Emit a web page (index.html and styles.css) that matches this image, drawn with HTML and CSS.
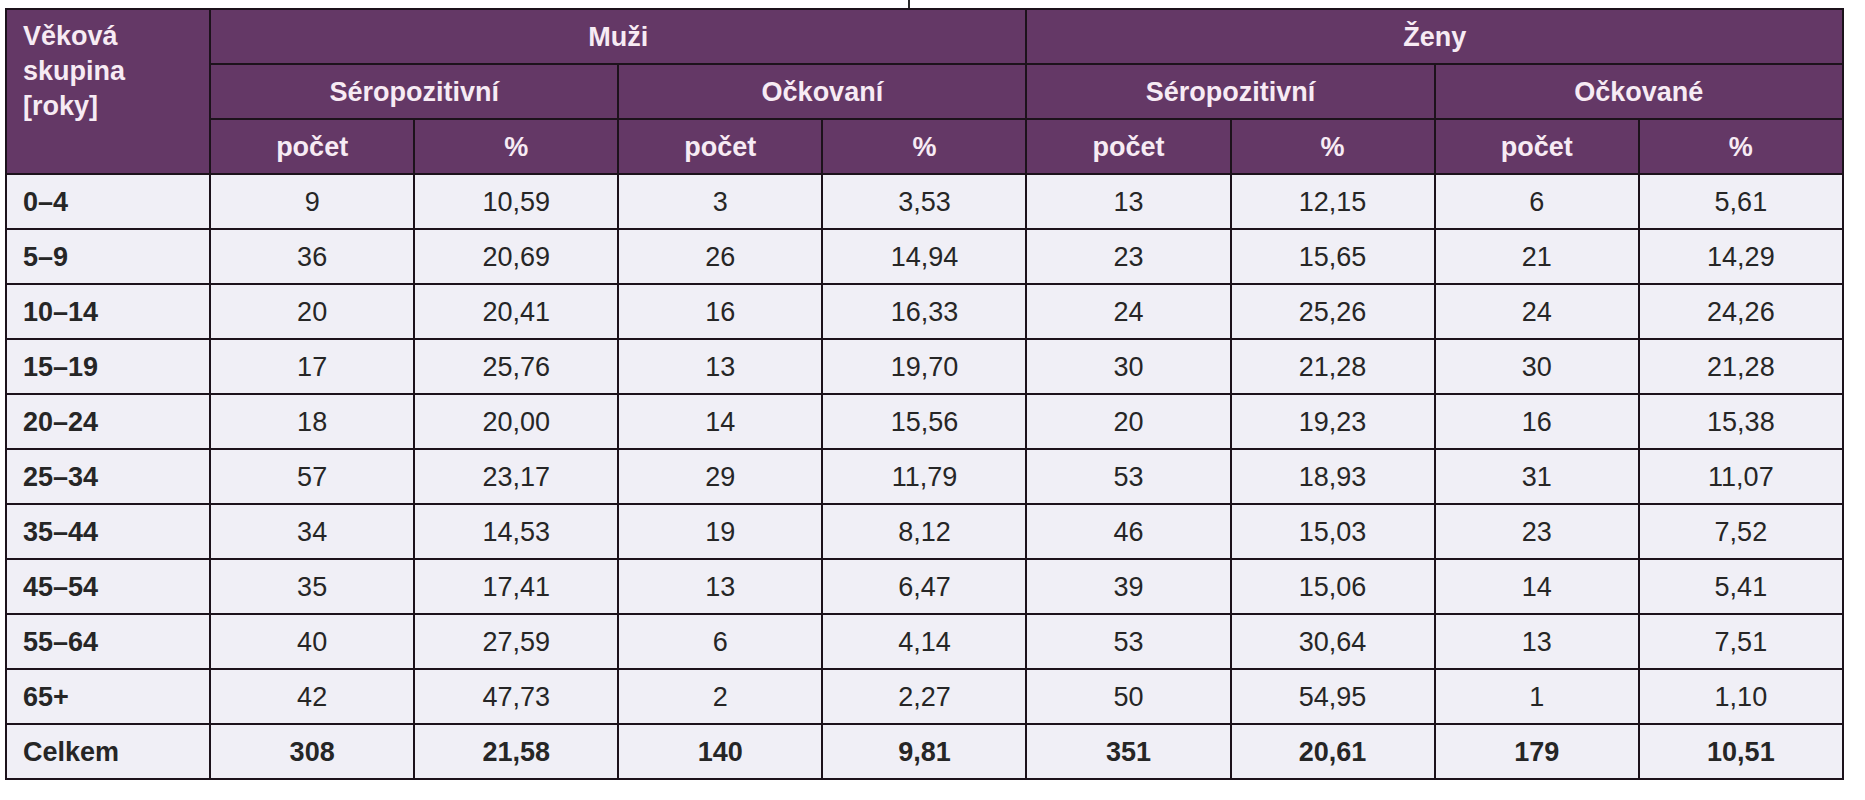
FILE: index.html
```html
<!DOCTYPE html>
<html lang="cs">
<head>
<meta charset="utf-8">
<title>Tabulka</title>
<link rel="stylesheet" href="styles.css">
</head>
<body>
<div class="page">
  <div class="caption"><span class="tick"></span></div>
  <table class="data">
    <colgroup>
      <col><col><col><col><col><col><col><col><col>
    </colgroup>
    <thead>
      <tr>
        <th class="age" rowspan="3">Věková<br>skupina<br>[roky]</th>
        <th colspan="4">Muži</th>
        <th colspan="4">Ženy</th>
      </tr>
      <tr>
        <th colspan="2">Séropozitivní</th>
        <th colspan="2">Očkovaní</th>
        <th colspan="2">Séropozitivní</th>
        <th colspan="2">Očkované</th>
      </tr>
      <tr>
        <th>počet</th><th>%</th><th>počet</th><th>%</th>
        <th>počet</th><th>%</th><th>počet</th><th>%</th>
      </tr>
    </thead>
    <tbody>
      <tr><th>0–4</th><td>9</td><td>10,59</td><td>3</td><td>3,53</td><td>13</td><td>12,15</td><td>6</td><td>5,61</td></tr>
      <tr><th>5–9</th><td>36</td><td>20,69</td><td>26</td><td>14,94</td><td>23</td><td>15,65</td><td>21</td><td>14,29</td></tr>
      <tr><th>10–14</th><td>20</td><td>20,41</td><td>16</td><td>16,33</td><td>24</td><td>25,26</td><td>24</td><td>24,26</td></tr>
      <tr><th>15–19</th><td>17</td><td>25,76</td><td>13</td><td>19,70</td><td>30</td><td>21,28</td><td>30</td><td>21,28</td></tr>
      <tr><th>20–24</th><td>18</td><td>20,00</td><td>14</td><td>15,56</td><td>20</td><td>19,23</td><td>16</td><td>15,38</td></tr>
      <tr><th>25–34</th><td>57</td><td>23,17</td><td>29</td><td>11,79</td><td>53</td><td>18,93</td><td>31</td><td>11,07</td></tr>
      <tr><th>35–44</th><td>34</td><td>14,53</td><td>19</td><td>8,12</td><td>46</td><td>15,03</td><td>23</td><td>7,52</td></tr>
      <tr><th>45–54</th><td>35</td><td>17,41</td><td>13</td><td>6,47</td><td>39</td><td>15,06</td><td>14</td><td>5,41</td></tr>
      <tr><th>55–64</th><td>40</td><td>27,59</td><td>6</td><td>4,14</td><td>53</td><td>30,64</td><td>13</td><td>7,51</td></tr>
      <tr><th>65+</th><td>42</td><td>47,73</td><td>2</td><td>2,27</td><td>50</td><td>54,95</td><td>1</td><td>1,10</td></tr>
      <tr class="total"><th>Celkem</th><td>308</td><td>21,58</td><td>140</td><td>9,81</td><td>351</td><td>20,61</td><td>179</td><td>10,51</td></tr>
    </tbody>
  </table>
</div>
</body>
</html>
```
FILE: styles.css
```css
html, body {
  margin: 0;
  padding: 0;
  background: #ffffff;
}

.page {
  padding: 0 0 0 5px;
  font-family: "Liberation Sans", Arial, sans-serif;
}

.caption {
  height: 8px;
  display: flex;
}

.tick {
  display: block;
  width: 2px;
  height: 8px;
  margin-left: 903px;
  background: #2a2a2a;
}

.data {
  border-collapse: collapse;
  table-layout: fixed;
  width: 1839px;
}

.data col {
  width: 204px;
}

.data th,
.data td {
  border: 2px solid #1c121b;
  padding: 0;
  height: 53px;
  text-align: center;
  vertical-align: middle;
  font-size: 27px;
  line-height: 30px;
}

.data thead th {
  background: #643866;
  color: #f7ebf4;
  font-weight: bold;
}

.data thead th.age {
  text-align: left;
  vertical-align: top;
  padding: 9px 0 0 16px;
  line-height: 35px;
}

.data tbody th,
.data tbody td {
  background: #f0eff6;
  color: #262626;
}

.data tbody th {
  text-align: left;
  padding-left: 16px;
  font-weight: bold;
}

.data tbody td {
  font-weight: normal;
}

.data tbody tr.total td {
  font-weight: bold;
}
```
